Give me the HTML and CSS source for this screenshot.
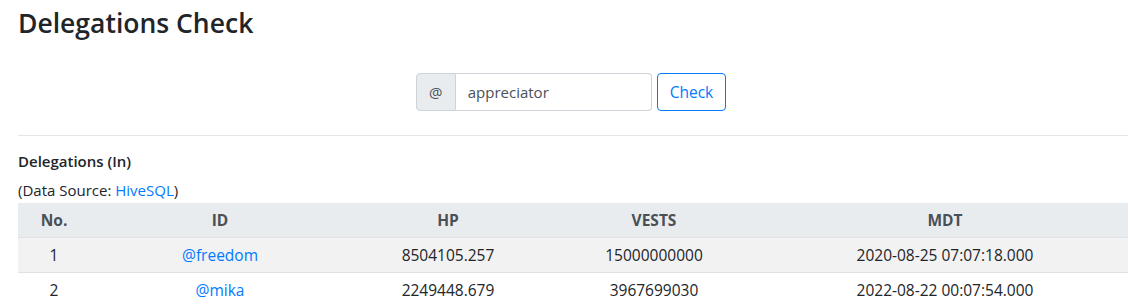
FILE: index.html
```html
<!DOCTYPE html>
<html lang="en">

<head>
    <meta charset="UTF-8">
    <meta name="viewport" content="width=device-width, initial-scale=1.0">
    <title>Delegations Check</title>
    <link rel="stylesheet" href="styles.css">
</head>

<body>
    <div class="container">
        <h2>Delegations Check</h2>

        <form class="check-form">
            <div class="input-group">
                <span class="input-prepend">@</span>
                <input type="text" class="form-control" value="appreciator">
            </div>
            <button type="button" class="btn-check">Check</button>
        </form>

        <hr>

        <h6>Delegations (In)</h6>
        <p class="source">(Data Source: <a href="#">HiveSQL</a>)</p>

        <table class="table">
            <colgroup>
                <col class="col-no">
                <col class="col-id">
                <col class="col-hp">
                <col class="col-vests">
                <col>
            </colgroup>
            <thead>
                <tr>
                    <th>No.</th>
                    <th>ID</th>
                    <th>HP</th>
                    <th>VESTS</th>
                    <th>MDT</th>
                </tr>
            </thead>
            <tbody>
                <tr>
                    <td>1</td>
                    <td><a href="#">@freedom</a></td>
                    <td>8504105.257</td>
                    <td>15000000000</td>
                    <td>2020-08-25 07:07:18.000</td>
                </tr>
                <tr>
                    <td>2</td>
                    <td><a href="#">@mika</a></td>
                    <td>2249448.679</td>
                    <td>3967699030</td>
                    <td>2022-08-22 00:07:54.000</td>
                </tr>
            </tbody>
        </table>
    </div>
</body>

</html>
```

FILE: styles.css
```css
body {
    font-family: "Open Sans", "Noto Sans", sans-serif;
    font-size: 15px;
    line-height: 1.5;
    color: #212529;
    margin: 0;
    background-color: #fff;
}

a {
    color: #007bff;
    text-decoration: none;
}

.container {
    padding: 0 15px 0 18px;
}

h2 {
    font-size: 26.5px;
    font-weight: 600;
    line-height: 1.2;
    margin: 8px 0 0;
}

.check-form {
    display: flex;
    justify-content: center;
    margin-top: 33px;
    padding-right: 4px;
}

.input-group {
    display: flex;
}

.input-prepend {
    width: 38px;
    height: 36px;
    line-height: 36px;
    text-align: center;
    color: #495057;
    background-color: #e9ecef;
    border: 1px solid #ced4da;
    border-radius: 4px 0 0 4px;
}

.form-control {
    width: 196px;
    height: 38px;
    box-sizing: border-box;
    padding: 6px 12px;
    font-family: inherit;
    font-size: 15px;
    color: #495057;
    border: 1px solid #ced4da;
    border-left: none;
    border-radius: 0 4px 4px 0;
    outline: none;
}

.btn-check {
    height: 38px;
    margin-left: 5px;
    padding: 6px 12px;
    font-family: inherit;
    font-size: 15.5px;
    color: #007bff;
    background-color: transparent;
    border: 1px solid #007bff;
    border-radius: 4px;
}

hr {
    margin: 24px 0 0;
    border: 0;
    border-top: 1px solid rgba(0, 0, 0, 0.1);
}

h6 {
    font-size: 15px;
    font-weight: 600;
    line-height: 1.2;
    margin: 16px 0 0;
}

.source {
    margin: 9px 0 0;
}

.table {
    width: 100%;
    border-collapse: collapse;
    margin-top: 2px;
    font-size: 15.5px;
}

.col-no {
    width: 72px;
}

.col-id {
    width: 260px;
}

.col-hp {
    width: 196px;
}

.col-vests {
    width: 216px;
}

.table th,
.table td {
    padding: 5px;
    line-height: 24px;
    text-align: center;
    font-weight: normal;
}

.table thead th {
    font-weight: 700;
    color: #495057;
    background-color: #e9ecef;
    border-bottom: 1px solid #dee2e6;
}

.table tbody td {
    border-top: 1px solid #dee2e6;
}

.table tbody tr:nth-of-type(odd) {
    background-color: rgba(0, 0, 0, 0.05);
}
```
